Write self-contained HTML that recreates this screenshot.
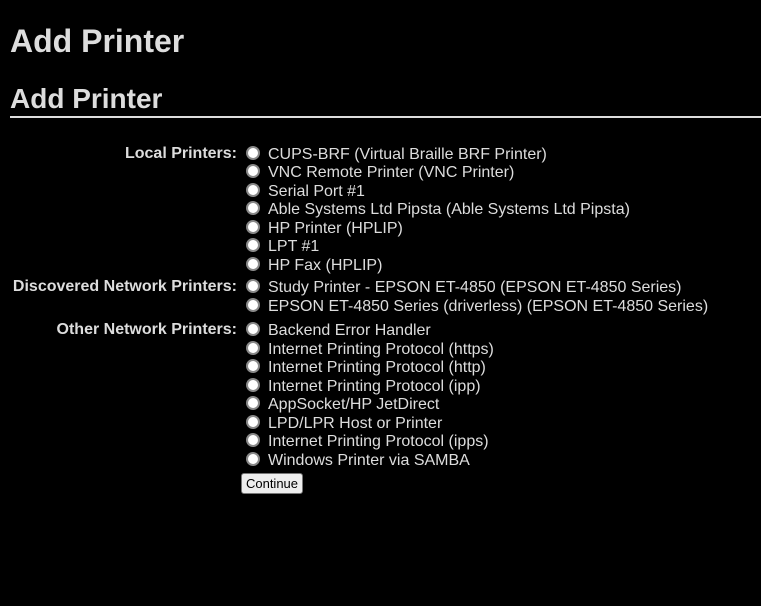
<!DOCTYPE html>
<html><head><style>
html,body{margin:0;background:#000;width:761px;height:606px;overflow:hidden}
body{font-family:"Liberation Sans",Arial,sans-serif;color:#ddd;position:relative}
h1{position:absolute;left:10px;top:22px;margin:0;font-size:32px;font-weight:bold;line-height:38px}
h2{position:absolute;left:10px;top:82px;margin:0;font-size:28px;font-weight:bold;line-height:34px}
.rule{position:absolute;left:10px;right:0;top:116px;height:2px;background:#ddd}
.l{position:absolute;right:524px;font-size:16px;font-weight:bold;line-height:18px;white-space:nowrap}
.r{position:absolute;left:246px;font-size:16px;line-height:18px;white-space:nowrap}
.r i{display:inline-block;width:10px;height:10px;border-radius:50%;background:#fff;border:2px solid #888;position:relative;top:1px;margin-right:8px}
.btn{position:absolute;left:241px;top:473px;width:60px;height:19px;border:1px solid #777;border-radius:3px;background:#eee;color:#000;font-size:13px;line-height:19px;text-align:center}
</style></head><body>
<h1>Add Printer</h1>
<h2>Add Printer</h2>
<div class="rule"></div>
<div class="l" style="top:145px">Local Printers:</div>
<div class="l" style="top:278px">Discovered Network Printers:</div>
<div class="l" style="top:321px">Other Network Printers:</div>
<div class="r" style="top:145px"><i></i>CUPS-BRF (Virtual Braille BRF Printer)</div>
<div class="r" style="top:163px"><i></i>VNC Remote Printer (VNC Printer)</div>
<div class="r" style="top:182px"><i></i>Serial Port #1</div>
<div class="r" style="top:200px"><i></i>Able Systems Ltd Pipsta (Able Systems Ltd Pipsta)</div>
<div class="r" style="top:219px"><i></i>HP Printer (HPLIP)</div>
<div class="r" style="top:237px"><i></i>LPT #1</div>
<div class="r" style="top:256px"><i></i>HP Fax (HPLIP)</div>
<div class="r" style="top:278px"><i></i>Study Printer - EPSON ET-4850 (EPSON ET-4850 Series)</div>
<div class="r" style="top:297px"><i></i>EPSON ET-4850 Series (driverless) (EPSON ET-4850 Series)</div>
<div class="r" style="top:321px"><i></i>Backend Error Handler</div>
<div class="r" style="top:340px"><i></i>Internet Printing Protocol (https)</div>
<div class="r" style="top:358px"><i></i>Internet Printing Protocol (http)</div>
<div class="r" style="top:377px"><i></i>Internet Printing Protocol (ipp)</div>
<div class="r" style="top:395px"><i></i>AppSocket/HP JetDirect</div>
<div class="r" style="top:414px"><i></i>LPD/LPR Host or Printer</div>
<div class="r" style="top:432px"><i></i>Internet Printing Protocol (ipps)</div>
<div class="r" style="top:451px"><i></i>Windows Printer via SAMBA</div>
<div class="btn">Continue</div>
</body></html>
